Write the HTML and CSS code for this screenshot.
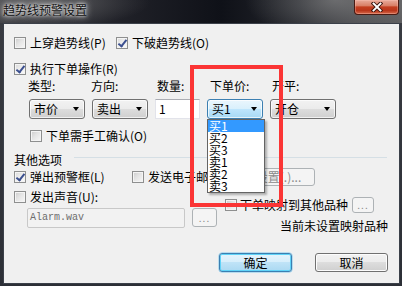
FILE: index.html
```html
<!DOCTYPE html>
<html lang="zh-CN">
<head>
<meta charset="utf-8">
<title>趋势线预警设置</title>
<link rel="stylesheet" href="styles.css">
</head>
<body>
<div class="window">
  <header class="titlebar">
    <span class="title">趋势线预警设置</span>
    <span class="close">
      <svg width="12" height="10" viewBox="0 0 12 10"><path d="M2.5 1.5L9.5 8.5M9.5 1.5L2.5 8.5" stroke="#3b1610" stroke-width="3.8" stroke-linecap="square" fill="none"/><path d="M2.5 1.5L9.5 8.5M9.5 1.5L2.5 8.5" stroke="#fff" stroke-width="1.9" stroke-linecap="square" fill="none"/></svg>
    </span>
  </header>
  <main class="client">
    <div class="row r1">
      <label class="chk w-first"><span class="box"></span><span>上穿趋势线(P)</span></label>
      <label class="chk"><span class="box on"></span><span>下破趋势线(O)</span></label>
    </div>
    <div class="row r2">
      <label class="chk"><span class="box on"></span><span>执行下单操作(R)</span></label>
    </div>
    <div class="order">
      <span class="lbl la">类型:</span>
      <span class="lbl la">方向:</span>
      <span class="lbl lb">数量:</span>
      <span class="lbl lc">下单价:</span>
      <span class="lbl lb">开平:</span>
      <div class="combo">市价<i class="arrow"></i></div>
      <div class="combo">卖出<i class="arrow"></i></div>
      <div class="field">1</div>
      <div class="combo focus">买1<i class="arrow"></i>
        <ul class="drop">
          <li class="sel">买1</li>
          <li>买2</li>
          <li>买3</li>
          <li>卖1</li>
          <li>卖2</li>
          <li>卖3</li>
        </ul>
      </div>
      <div class="combo">开仓<i class="arrow"></i></div>
    </div>
    <div class="row r3">
      <label class="chk"><span class="box"></span><span>下单需手工确认(O)</span></label>
    </div>
    <div class="group">
      <span>其他选项</span><span class="sep"></span>
    </div>
    <div class="row r4">
      <label class="chk w-popup"><span class="box on"></span><span>弹出预警框(L)</span></label>
      <label class="chk w-mail"><span class="box"></span><span>发送电子邮件(M)</span></label>
      <span class="btn dis setup">设置(.)...</span>
    </div>
    <div class="lower">
      <div class="lcol">
        <label class="chk"><span class="box"></span><span>发出声音(U):</span></label>
        <div class="sound">
          <span class="path">Alarm.wav</span>
          <span class="btn dis dots">...</span>
        </div>
      </div>
      <div class="rcol">
        <div class="map">
          <label class="chk"><span class="box"></span><span>下单映射到其他品种</span></label>
          <span class="btn dis dots small">...</span>
        </div>
        <span class="note">当前未设置映射品种</span>
      </div>
    </div>
    <div class="actions">
      <span class="btn ok">确定</span>
      <span class="btn">取消</span>
    </div>
  </main>
  <div class="mark"></div>
</div>
</body>
</html>
```

FILE: styles.css
```css
* {
  box-sizing: border-box;
  margin: 0;
  padding: 0;
}

html, body {
  width: 402px;
  height: 286px;
  overflow: hidden;
}

body {
  background: #33363d;
  font-family: "Noto Sans CJK SC", "Noto Sans", sans-serif;
  font-size: 12px;
  line-height: 12px;
  color: #000;
}

.window {
  position: relative;
  width: 402px;
  height: 286px;
  display: flex;
  flex-direction: column;
  background: linear-gradient(180deg, #3a3c42 0%, #2c2f36 100%);
}

/* ---------- title bar ---------- */
.titlebar {
  height: 23px;
  display: flex;
  justify-content: space-between;
  align-items: flex-start;
  background:
    radial-gradient(ellipse 110px 26px at 40px 2px, rgba(130, 130, 130, 0.55), transparent),
    radial-gradient(ellipse 90px 40px at 335px 0px, rgba(150, 150, 150, 0.55), transparent),
    linear-gradient(90deg, #3e3f44 0%, #202128 30%, #0f1118 55%, #24262c 75%, #5e5e60 100%);
}

.title {
  padding: 3px 0 0 3px;
  line-height: 13px;
  color: #111;
  text-shadow: 0 0 3px #fff, 0 0 6px rgba(255, 255, 255, 0.8), 0 0 10px rgba(255, 255, 255, 0.5);
}

.close {
  width: 45px;
  height: 15px;
  margin-right: 3px;
  display: flex;
  align-items: center;
  justify-content: center;
  border: 1px solid #4a1a12;
  border-top: none;
  border-radius: 0 0 4px 4px;
  background: linear-gradient(180deg, #e8ab9b 0%, #d98068 40%, #c33e20 50%, #b9361b 75%, #d66a4b 100%);
  box-shadow: inset 0 0 0 1px rgba(255, 200, 190, 0.35);
}

/* ---------- client ---------- */
.client {
  flex: 1;
  margin: 0 2px 2px 3px;
  border: 1px solid #3b4049;
  background: #f0f0f0;
  display: flex;
  flex-direction: column;
}

.row {
  display: flex;
  align-items: center;
}

.r1 { margin-top: 13px; padding-left: 10px; height: 12px; }
.r2 { margin-top: 14px; padding-left: 10px; height: 12px; }
.r3 { margin-top: 11px; padding-left: 26px; height: 12px; }
.r4 { margin-top: 2px; padding-left: 10px; height: 18px; }

.chk {
  display: flex;
  align-items: center;
  gap: 4px;
  white-space: nowrap;
}

.w-first { width: 102px; }
.w-popup { width: 118px; }
.w-mail { width: 110px; }

.box {
  width: 12px;
  height: 12px;
  flex: none;
  border: 1px solid #8e8f8f;
  background: linear-gradient(135deg, #cbcbcb 0%, #e4e4e4 45%, #f7f7f7 100%);
  box-shadow: inset 0 0 0 1px #f4f4f4;
  position: relative;
}

.box.on {
  background: linear-gradient(135deg, #d8d8d8 0%, #ececec 45%, #fafafa 100%);
}

.box.on::after {
  content: "";
  position: absolute;
  left: 3px;
  top: 0px;
  width: 3px;
  height: 7px;
  border: solid #3b4f8f;
  border-width: 0 2px 2px 0;
  transform: rotate(38deg);
}

/* ---------- order grid ---------- */
.order {
  margin-top: 5px;
  padding-left: 25px;
  display: grid;
  grid-template-columns: 56px 56px 45px 56px 66px;
  grid-template-rows: 12px 20px;
  column-gap: 7px;
  row-gap: 7px;
}

.lbl { white-space: nowrap; }
.la { margin-left: -1px; }
.lb { margin-left: 2px; }
.lc { margin-left: 3px; }

.combo {
  position: relative;
  height: 20px;
  display: flex;
  align-items: center;
  justify-content: space-between;
  padding: 0 5px 0 4px;
  border: 1px solid #707070;
  border-radius: 3px;
  background: linear-gradient(180deg, #f2f2f2 0%, #ebebeb 50%, #dddddd 50%, #cfcfcf 100%);
  box-shadow: inset 0 0 0 1px rgba(255, 255, 255, 0.7);
}

.combo.focus {
  border-color: #3c7fb1;
  background: linear-gradient(180deg, #eaf6fd 0%, #d9f0fc 50%, #bee6fd 50%, #a7d9f5 100%);
}

.arrow {
  width: 0;
  height: 0;
  border-style: solid;
  border-width: 4px 3.5px 0 3.5px;
  border-color: #000 transparent transparent transparent;
}

.field {
  height: 20px;
  display: flex;
  align-items: center;
  padding-left: 3px;
  background: #fff;
  border: 1px solid #e2e3ea;
  border-top-color: #abadb3;
}

.drop {
  position: absolute;
  left: -1px;
  top: 19px;
  width: 58px;
  list-style: none;
  background: #fff;
  border: 1px solid #646464;
  box-shadow: 2px 2px 2px rgba(0, 0, 0, 0.28);
  z-index: 2;
}

.drop li {
  height: 12px;
  line-height: 12px;
  padding-left: 1px;
}

.drop li.sel {
  background: #3399ff;
  color: #fff;
}

/* ---------- other options ---------- */
.group {
  margin-top: 12px;
  padding: 0 12px 0 10px;
  height: 12px;
  display: flex;
  align-items: center;
}

.sep {
  flex: 1;
  margin-left: 12px;
  height: 1px;
  background: #d5dfe5;
  align-self: flex-start;
  margin-top: 3px;
}

.btn {
  display: flex;
  align-items: center;
  justify-content: center;
  border: 1px solid #707070;
  border-radius: 3px;
  background: linear-gradient(180deg, #f2f2f2 0%, #ebebeb 50%, #dddddd 50%, #cfcfcf 100%);
  box-shadow: inset 0 0 0 1px #fcfcfc;
  white-space: nowrap;
}

.btn.dis {
  border-color: #adb2b5;
  background: #f4f4f4;
  box-shadow: none;
  color: #8a8a8a;
}

.setup {
  width: 73px;
  height: 18px;
}

.lower {
  display: flex;
  gap: 8px;
  height: 46px;
}

.lcol {
  padding-top: 5px;
  padding-left: 10px;
  display: flex;
  flex-direction: column;
  gap: 5px;
}

.lcol .chk { height: 12px; }

.sound {
  display: flex;
  gap: 7px;
  padding-left: 13px;
}

.path {
  width: 158px;
  height: 20px;
  display: flex;
  align-items: center;
  padding-left: 2px;
  border: 1px solid #c8c8c8;
  border-radius: 2px;
  background: #f2f2f2;
  color: #6d6d6d;
  font-family: "Liberation Mono", "DejaVu Sans Mono", monospace;
  font-size: 10px;
}

.dots {
  width: 25px;
  height: 19px;
  letter-spacing: 1px;
  font-size: 10px;
  color: #9a9a9a;
}

.dots.small {
  width: 22px;
  height: 16px;
}

.rcol {
  width: 163px;
  padding-top: 11px;
  display: flex;
  flex-direction: column;
  gap: 7px;
}

.map {
  display: flex;
  align-items: center;
  gap: 4px;
  height: 16px;
}

.map .chk { gap: 3px; }

.note {
  align-self: flex-end;
  white-space: nowrap;
}

.actions {
  margin-top: 21px;
  padding-right: 11px;
  display: flex;
  justify-content: flex-end;
  gap: 23px;
}

.actions .btn {
  width: 73px;
  height: 19px;
}

.actions .btn.ok {
  border-color: #3c7fb1;
  background: linear-gradient(180deg, #e5f4fc 0%, #d6eefb 50%, #bfe3f7 50%, #abd9f2 100%);
  box-shadow: inset 0 0 0 1px #5fd3f8, 0 0 0 0.5px #7fc8ec;
}

/* ---------- red annotation frame ---------- */
.mark {
  position: absolute;
  left: 190px;
  top: 65px;
  width: 93px;
  height: 142px;
  border: 4px solid #fb3535;
  z-index: 3;
  pointer-events: none;
}
```
